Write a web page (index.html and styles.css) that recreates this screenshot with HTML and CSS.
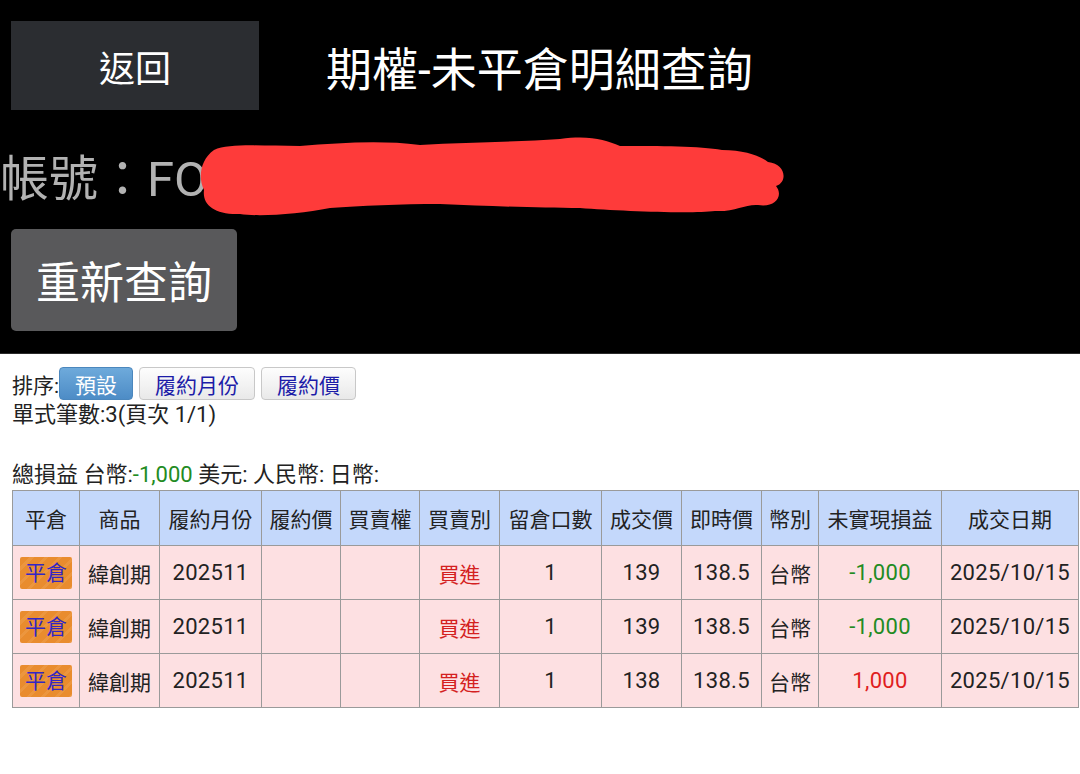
FILE: index.html
```html
<!DOCTYPE html>
<html lang="zh-Hant">
<head>
    <meta charset="UTF-8">
    <meta name="viewport" content="width=device-width, initial-scale=1.0">
    <title>期權-未平倉明細查詢</title>
    <link rel="stylesheet" href="styles.css">
</head>
<body>
    <div class="top">
        <div class="top-bar">
            <button class="back">返回</button>
            <h1 class="title">期權-未平倉明細查詢</h1>
        </div>
        <div class="account">帳號：FO</div>
        <button class="requery">重新查詢</button>
        <!-- 帳號遮蔽 -->
        <svg class="redact" width="1080" height="354" viewBox="0 0 1080 354">
            <path d="M214 150 C230 143 260 146 300 146 C340 143 380 140 420 145 C470 142 520 142 560 139 C590 135 605 140 620 146 C660 146 700 146 722 150 C745 150 760 156 768 162 C786 164 788 182 776 186 C784 196 775 208 758 205 C745 204 735 212 715 211 C690 214 620 211 580 208 C540 208 490 206 440 204 C400 204 360 206 330 208 C300 214 260 217 240 214 C215 215 202 205 204 190 C198 178 200 160 214 150 Z" fill="#fe3b3a"/>
        </svg>
    </div>

    <div class="content">
        <div class="sort">
            <span>排序:</span>
            <button class="sort-btn active">預設</button>
            <button class="sort-btn">履約月份</button>
            <button class="sort-btn">履約價</button>
        </div>
        <p class="line">單式筆數:3(頁次 1/1)</p>
        <p class="line">&nbsp;</p>
        <p class="line">總損益 台幣:<span class="gain">-1,000</span> 美元: 人民幣: 日幣:</p>

        <table class="grid">
            <colgroup>
                <col class="w67"><col class="w80"><col class="w102"><col class="w79"><col class="w79"><col class="w80">
                <col class="w102"><col class="w80"><col class="w80"><col class="w57"><col class="w123"><col class="w137">
            </colgroup>
            <thead>
                <tr>
                    <th>平倉</th><th>商品</th><th>履約月份</th><th>履約價</th><th>買賣權</th><th>買賣別</th>
                    <th>留倉口數</th><th>成交價</th><th>即時價</th><th>幣別</th><th>未實現損益</th><th>成交日期</th>
                </tr>
            </thead>
            <tbody>
                <tr>
                    <td><span class="close-btn">平倉</span></td><td>緯創期</td><td class="num">202511</td><td></td><td></td>
                    <td class="buy">買進</td><td class="num">1</td><td class="num">139</td><td class="num">138.5</td><td>台幣</td>
                    <td class="num gain">-1,000</td><td class="num">2025/10/15</td>
                </tr>
                <tr>
                    <td><span class="close-btn">平倉</span></td><td>緯創期</td><td class="num">202511</td><td></td><td></td>
                    <td class="buy">買進</td><td class="num">1</td><td class="num">139</td><td class="num">138.5</td><td>台幣</td>
                    <td class="num gain">-1,000</td><td class="num">2025/10/15</td>
                </tr>
                <tr>
                    <td><span class="close-btn">平倉</span></td><td>緯創期</td><td class="num">202511</td><td></td><td></td>
                    <td class="buy">買進</td><td class="num">1</td><td class="num">138</td><td class="num">138.5</td><td>台幣</td>
                    <td class="num loss">1,000</td><td class="num">2025/10/15</td>
                </tr>
            </tbody>
        </table>
    </div>
</body>
</html>
```

FILE: styles.css
```css
body {
    margin: 0;
    background: #fff;
    color: #222;
    font-family: Roboto, "Noto Sans CJK TC", sans-serif;
    width: 1080px;
    overflow: hidden;
}
button {
    font-family: inherit;
    cursor: pointer;
}
.top {
    position: relative;
    height: 354px;
    box-sizing: border-box;
    padding-top: 21px;
    background: #000;
    border-bottom: 1px solid #2a2a2a;
}
.top-bar {
    display: flex;
    align-items: center;
    margin-left: 11px;
}
.back {
    width: 248px;
    height: 89px;
    border: none;
    background: #2b2d31;
    color: #fff;
    font-size: 36px;
}
.title {
    margin: 0 0 0 67px;
    color: #fff;
    font-size: 46px;
    font-weight: normal;
}
.account {
    margin-top: 40px;
    color: #b2b2b2;
    font-size: 49px;
    line-height: 59px;
}
.requery {
    display: block;
    margin: 20px 0 0 11px;
    width: 226px;
    height: 102px;
    border: none;
    border-radius: 5px;
    background: #59595b;
    color: #fff;
    font-size: 44px;
}
.redact {
    position: absolute;
    left: 0;
    top: 0;
    pointer-events: none;
}
.content {
    padding: 13px 0 0 12px;
    font-size: 21px;
}
.sort {
    display: flex;
    align-items: center;
    height: 33px;
}
.sort-btn {
    height: 33px;
    margin-right: 6px;
    padding: 0 15px;
    border: 1px solid #c8c8c8;
    border-radius: 4px;
    background: linear-gradient(#fdfdfd, #e9e9e9);
    color: #1c1ca8;
    font-size: 21px;
}
.sort-btn.active {
    border-color: #4b87bd;
    background: linear-gradient(#6eaadb, #4d8cc6);
    color: #fff;
}
.line {
    margin: 0;
    font-size: 22px;
    line-height: 30px;
}
.gain {
    color: #228b22;
}
.loss {
    color: #e01e1e;
}
.buy {
    color: #d42020;
}
.grid {
    border-collapse: collapse;
    table-layout: fixed;
    width: 1066px;
    font-size: 21px;
}
.grid th, .grid td {
    border: 1px solid #9a9a9a;
    padding: 0;
    text-align: center;
    white-space: nowrap;
}
.grid th {
    height: 54px;
    background: #c4d8fb;
    font-weight: normal;
    color: #222;
}
.grid td {
    height: 53px;
    background: #fde0e2;
}
.grid .num {
    font-size: 22px;
    letter-spacing: 0.3px;
}
.close-btn {
    display: inline-block;
    width: 52px;
    height: 32px;
    line-height: 32px;
    border-radius: 2px;
    background: repeating-linear-gradient(135deg, #e98c2e 0 7px, #ec963e 7px 10px);
    color: #3326c4;
    vertical-align: middle;
}
.w67 { width: 67px; }
.w80 { width: 80px; }
.w102 { width: 102px; }
.w79 { width: 79px; }
.w57 { width: 57px; }
.w123 { width: 123px; }
.w137 { width: 137px; }
```
